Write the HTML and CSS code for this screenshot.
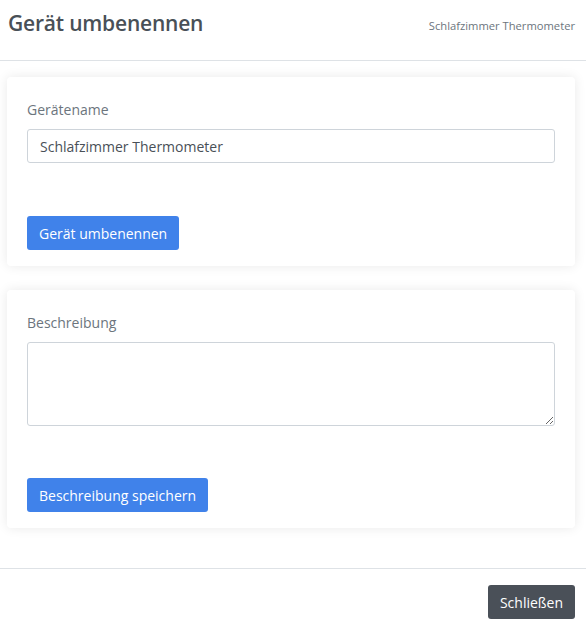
FILE: index.html
```html
<!DOCTYPE html>
<html lang="de">

<head>
  <meta charset="UTF-8">
  <meta name="viewport" content="width=device-width, initial-scale=1.0">
  <title>Gerät umbenennen</title>
  <link rel="stylesheet" href="styles.css">
</head>

<body>
  <div class="modal">
    <div class="modal-header">
      <h4 class="modal-title">Gerät umbenennen</h4>
      <span class="device-name">Schlafzimmer Thermometer</span>
    </div>

    <div class="modal-body">
      <div class="card">
        <label for="name">Gerätename</label>
        <input type="text" id="name" class="form-control" value="Schlafzimmer Thermometer">
        <button class="btn btn-primary">Gerät umbenennen</button>
      </div>

      <div class="card">
        <label for="desc">Beschreibung</label>
        <textarea id="desc" class="form-control"></textarea>
        <button class="btn btn-primary">Beschreibung speichern</button>
      </div>
    </div>

    <div class="modal-footer">
      <button class="btn btn-secondary">Schließen</button>
    </div>
  </div>
</body>

</html>
```

FILE: styles.css
```css
* {
  margin: 0;
  padding: 0;
  box-sizing: border-box;
}

body {
  font-family: "Open Sans", "Noto Sans", sans-serif;
  background: #fff;
  color: #495057;
}

.modal-header {
  height: 61px;
  display: flex;
  justify-content: space-between;
  align-items: flex-start;
  padding: 8px 11px 0 8px;
  border-bottom: 1px solid #dee2e6;
}

.modal-title {
  font-size: 21px;
  font-weight: 600;
  line-height: 30px;
  color: #495057;
  letter-spacing: -0.2px;
}

.device-name {
  font-size: 11.2px;
  color: #6c757d;
  line-height: 18px;
  padding-top: 9px;
}

.modal-body {
  padding: 16px 11px 40px 7px;
  display: flex;
  flex-direction: column;
  gap: 24px;
}

.card {
  display: flex;
  flex-direction: column;
  align-items: flex-start;
  background: #fff;
  border-radius: 4px;
  padding: 21px 20px 16px;
  box-shadow: 0 0 12px rgba(0, 0, 0, 0.09);
}

label {
  font-size: 14px;
  line-height: 24px;
  color: #6c757d;
  margin-bottom: 7px;
}

.form-control {
  width: 100%;
  height: 34px;
  border: 1px solid #ced4da;
  border-radius: 3px;
  padding: 4px 12px;
  font-family: inherit;
  font-size: 14px;
  color: #495057;
  outline: none;
  margin-bottom: 53px;
}

textarea.form-control {
  height: 84px;
  margin-bottom: 52px;
  resize: vertical;
}

.btn {
  height: 34px;
  padding: 0 12px;
  border: none;
  border-radius: 3px;
  font-family: inherit;
  font-size: 14px;
  color: #fff;
}

.btn-primary {
  background: #4082ea;
}

.btn-secondary {
  background: #4a5058;
}

.modal-footer {
  border-top: 1px solid #dee2e6;
  display: flex;
  justify-content: flex-end;
  padding: 16px 11px 0 0;
}
```
